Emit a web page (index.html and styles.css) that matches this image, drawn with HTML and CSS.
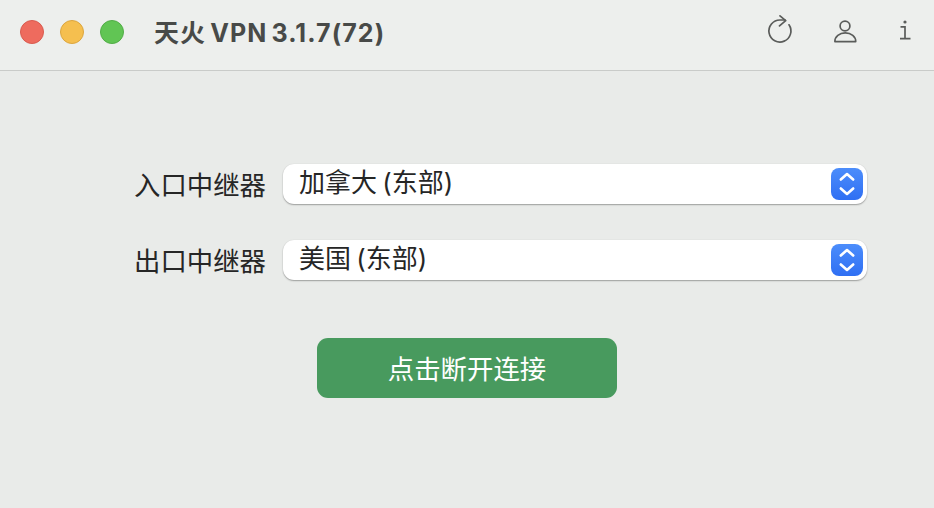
FILE: index.html
```html
<!DOCTYPE html>
<html lang="zh">
<head>
<meta charset="utf-8">
<title>天火 VPN</title>
<link rel="stylesheet" href="styles.css">
</head>
<body>
<div class="window">
  <header class="titlebar">
    <div class="lights">
      <span class="light red"></span>
      <span class="light yellow"></span>
      <span class="light green"></span>
    </div>
    <h1 class="title">天火 VPN 3.1.7(72)</h1>
    <div class="tools">
      <svg width="26" height="30" viewBox="0 0 26 30" fill="none">
        <path d="M22 9.8A11 11 0 1 1 13 5H18" stroke="#5a5c5a" stroke-width="1.7" stroke-linecap="round"/>
        <path d="M13 .9 18.7 5.7 12.5 10.9" stroke="#5a5c5a" stroke-width="1.7" stroke-linecap="round" stroke-linejoin="round"/>
      </svg>
      <svg width="26" height="30" viewBox="0 0 26 30" fill="none">
        <circle cx="13" cy="11" r="4.9" stroke="#5a5c5a" stroke-width="1.7"/>
        <path d="M2.9 26.7H23.7C24 21.5 19 17.9 13.3 17.9S2.6 21.5 2.9 26.7Z" stroke="#5a5c5a" stroke-width="1.7" stroke-linejoin="round"/>
      </svg>
      <svg class="info" width="14" height="30" viewBox="0 0 14 30" fill="none">
        <circle cx="7" cy="7" r="1.6" fill="#5a5c5a"/>
        <path d="M2.5 11.8H7V23.7M2 23.7H12.5" stroke="#5a5c5a" stroke-width="1.7"/>
      </svg>
    </div>
  </header>
  <main class="content">
    <div class="row">
      <label class="label">入口中继器</label>
      <div class="select">
        <span class="value">加拿大 (东部)</span>
        <span class="stepper">
          <svg width="32" height="32" viewBox="0 0 32 32" fill="none">
            <path d="M9.8 11.5 16 6 22.2 11.5M9.8 20.5 16 26 22.2 20.5" stroke="#fff" stroke-width="2.6" stroke-linecap="round" stroke-linejoin="round"/>
          </svg>
        </span>
      </div>
    </div>
    <div class="row">
      <label class="label">出口中继器</label>
      <div class="select">
        <span class="value">美国 (东部)</span>
        <span class="stepper">
          <svg width="32" height="32" viewBox="0 0 32 32" fill="none">
            <path d="M9.8 11.5 16 6 22.2 11.5M9.8 20.5 16 26 22.2 20.5" stroke="#fff" stroke-width="2.6" stroke-linecap="round" stroke-linejoin="round"/>
          </svg>
        </span>
      </div>
    </div>
    <button class="connect">点击断开连接</button>
  </main>
</div>
</body>
</html>
```

FILE: styles.css
```css
* { box-sizing: border-box; }
html, body { margin: 0; padding: 0; }
body {
  width: 934px;
  height: 508px;
  overflow: hidden;
  background: #e9ebe9;
  font-family: Inter, "Noto Sans CJK SC", sans-serif;
  color: #262626;
}
.window { display: flex; flex-direction: column; height: 100%; }
.titlebar {
  height: 71px;
  flex: none;
  display: flex;
  align-items: center;
  padding: 0 22px 6px 20px;
  background: #edefed;
  border-bottom: 1px solid #c9cbc9;
}
.lights { display: flex; gap: 16px; }
.light {
  width: 24px;
  height: 24px;
  border-radius: 50%;
  border: 1px solid transparent;
}
.red { background: #ee6b5e; border-color: #d95b4f; }
.yellow { background: #f5bf4f; border-color: #dca63f; }
.green { background: #61c554; border-color: #52ad47; }
.title {
  margin: 2px 0 0 30px;
  font-size: 25px;
  font-weight: 700;
  line-height: 34px;
  letter-spacing: 1.1px;
  word-spacing: -3px;
  color: #484a48;
  white-space: nowrap;
}
.tools {
  margin: 0 0 4px auto;
  display: flex;
  align-items: center;
  gap: 39px;
}
.info { margin-left: 1px; }
.content {
  padding: 93px 67px 0 134px;
  display: flex;
  flex-direction: column;
}
.row {
  display: flex;
  align-items: center;
  gap: 17px;
  height: 40px;
  margin-bottom: 36px;
}
.label {
  width: 132px;
  flex: none;
  font-size: 26.4px;
  line-height: 36px;
  white-space: nowrap;
  margin-top: 2px;
}
.select {
  flex: 1;
  height: 40px;
  display: flex;
  align-items: center;
  justify-content: space-between;
  padding: 0 4px 0 16px;
  background: #fff;
  border-radius: 11px;
  box-shadow: 0 1px 1.5px rgba(0, 0, 0, 0.32), 0 0 1px rgba(0, 0, 0, 0.12);
}
.value {
  font-size: 26px;
  line-height: 36px;
  word-spacing: -2px;
  white-space: nowrap;
  margin-bottom: 2px;
}
.stepper {
  width: 32px;
  height: 32px;
  border-radius: 8px;
  background: linear-gradient(#4c8dfb, #2f6ff3);
}
.stepper svg { display: block; }
.connect {
  align-self: flex-start;
  margin: 22px 0 0 183px;
  width: 300px;
  height: 60px;
  border: 0;
  border-radius: 11px;
  background: #489a5e;
  color: #fff;
  font: inherit;
  font-size: 26.4px;
  padding: 0 0 2px;
}
```
